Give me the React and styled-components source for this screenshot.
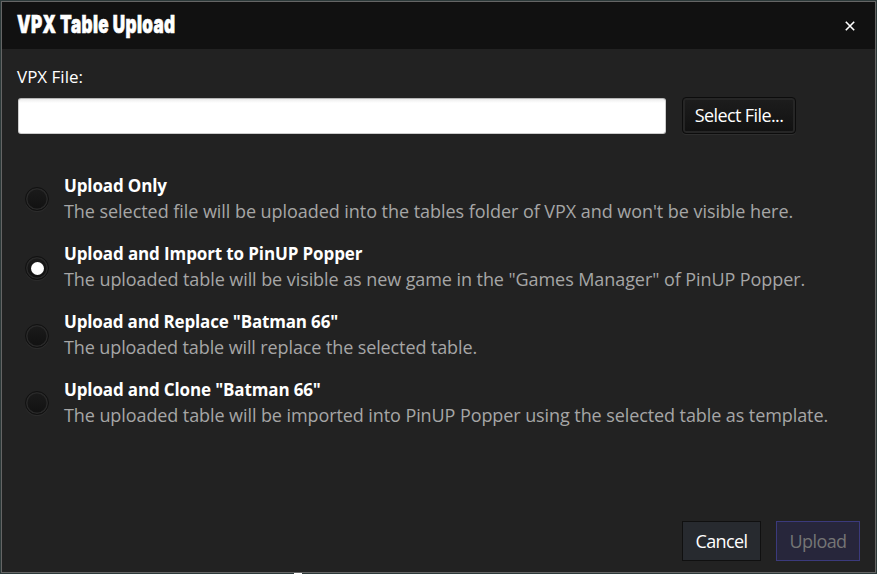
import React, { useState } from "react";
import styled, { createGlobalStyle, css } from "styled-components";

const Page = createGlobalStyle`
  * { box-sizing: border-box; }
  body { margin: 0; background: #2d3a3a; overflow: hidden; }
`;

const Desktop = styled.div`
  position: relative;
  width: 877px;
  height: 574px;
  padding: 1px;
  background: #2d3a3a;
  font-family: "Open Sans", "Noto Sans", sans-serif;
  font-size: 18px;
  color: #fff;
`;

const Dialog = styled.main`
  display: flex;
  flex-direction: column;
  width: 875px;
  height: 572px;
  border: 1px solid #656565;
  background: #222;
`;

const TitleBar = styled.header`
  display: flex;
  flex: none;
  align-items: center;
  justify-content: space-between;
  height: 47px;
  padding: 0 20px 4px 15px;
  background: #111;
`;

const Title = styled.h1`
  margin: 0;
  font: 900 25px/30px Inter, sans-serif;
  letter-spacing: 0.5px;
  white-space: nowrap;
  -webkit-text-stroke: 0.6px #fff;
  transform: scaleX(0.685);
  transform-origin: left center;
`;

const CloseButton = styled.button`
  display: flex;
  padding: 0;
  border: 0;
  margin-top: 4px;
  background: none;
  color: #fff;
`;

const Body = styled.section`
  display: flex;
  flex: 1;
  flex-direction: column;
  padding: 14px 15px 11px 15px;
`;

const Text = styled.span`
  white-space: nowrap;
  letter-spacing: ${(p) => p.$spacing || 0}px;
`;

const FieldLabel = styled.label`
  height: 26px;
  font-size: 17px;
  line-height: 27px;
`;

const FileRow = styled.div`
  display: flex;
  align-items: flex-start;
  gap: 16px;
  margin-top: 8px;
  height: 38px;
`;

const FileInput = styled.input`
  width: 648px;
  height: 36px;
  margin: 1px 0 0 1px;
  padding: 0 10px;
  border: 1px solid #ccc;
  border-top-color: #b5b5b5;
  border-radius: 3px;
  background: linear-gradient(#ececec, #fff 4px);
  outline: 0;
`;

const buttonText = css`
  display: flex;
  align-items: center;
  justify-content: center;
  padding: 0;
  font: 18px "Open Sans", sans-serif;
`;

const SelectButton = styled.button`
  ${buttonText}
  width: 114px;
  height: 37px;
  padding-bottom: 1px;
  border: 1px solid #0c0c0c;
  border-radius: 4px;
  background: linear-gradient(#1d1d1d, #111);
  box-shadow: inset 0 0 0 2px #262626, 0 1px 0 #2e2e2e;
  color: #fff;
`;

const Options = styled.div`
  display: flex;
  flex-direction: column;
  margin-top: 37px;
`;

const Option = styled.label`
  display: flex;
  height: 68px;
`;

const Radio = styled.span`
  display: flex;
  flex: none;
  align-items: center;
  justify-content: center;
  width: 24px;
  height: 24px;
  margin: ${(p) => p.$top}px 15px 0 8px;
  border: 1px solid #111;
  border-radius: 50%;
  background: linear-gradient(#1b1b1b, #111);
  box-shadow: inset 0 0 0 1.5px #292929, 0 1px 0 #2d2d2d;
  &::after {
    content: "";
    width: 13px;
    height: 13px;
    border-radius: 50%;
    background: ${(p) => (p.$checked ? "#fff" : "transparent")};
  }
`;

const OptionText = styled.span`
  display: flex;
  flex-direction: column;
`;

const OptionTitle = styled(Text)`
  height: 26px;
  font-size: 17px;
  font-weight: 700;
  line-height: 28px;
`;

const OptionDescription = styled(Text)`
  color: #a6a6a6;
  line-height: 26px;
`;

const HiddenInput = styled.input`
  position: absolute;
  opacity: 0;
  pointer-events: none;
`;

const Footer = styled.footer`
  display: flex;
  justify-content: flex-end;
  gap: 15px;
  margin-top: auto;
`;

const FooterButton = styled.button`
  ${buttonText}
  width: ${(p) => (p.$primary ? 84 : 79)}px;
  height: 40px;
  border: 1px solid ${(p) => (p.$primary ? "#3b3a7c" : "#101010")};
  background: ${(p) => (p.$primary ? "#27263b" : "#272a2f")};
  color: ${(p) => (p.$primary ? "#757575" : "#fff")};
`;

const DesktopSpeck = styled.i`
  position: absolute;
  left: 294px;
  bottom: 0;
  width: 8px;
  height: 1px;
  background: #fff;
`;

const options = [
  { title: "Upload Only", text: "The selected file will be uploaded into the tables folder of VPX and won't be visible here.", ts: -0.13, ds: -0.05, top: 15 },
  { title: "Upload and Import to PinUP Popper", text: 'The uploaded table will be visible as new game in the "Games Manager" of PinUP Popper.', ts: -0.12, ds: -0.075, top: 16 },
  { title: 'Upload and Replace "Batman 66"', text: "The uploaded table will replace the selected table.", ts: -0.17, ds: -0.11, top: 16 },
  { title: 'Upload and Clone "Batman 66"', text: "The uploaded table will be imported into PinUP Popper using the selected table as template.", ts: -0.14, ds: -0.085, top: 15 },
];

export default function App() {
  const [selected, setSelected] = useState(1);
  return (
    <Desktop>
      <Page />
      <Dialog>
        <TitleBar>
          <Title>VPX Table Upload</Title>
          <CloseButton aria-label="Close">
            <svg width="10" height="10" viewBox="0 0 10 10" stroke="currentColor" strokeWidth="1.6">
              <path d="M0.8 0.8 9.2 9.2M9.2 0.8 0.8 9.2" />
            </svg>
          </CloseButton>
        </TitleBar>
        <Body>
          <FieldLabel htmlFor="file"><Text>VPX File:</Text></FieldLabel>
          <FileRow>
            <FileInput id="file" readOnly />
            <SelectButton><Text $spacing={-0.6}>Select File...</Text></SelectButton>
          </FileRow>
          <Options>
            {options.map((o, i) => (
              <Option key={o.title}>
                <HiddenInput type="radio" name="mode" checked={i === selected} onChange={() => setSelected(i)} />
                <Radio $checked={i === selected} $top={o.top} />
                <OptionText>
                  <OptionTitle $spacing={o.ts}>{o.title}</OptionTitle>
                  <OptionDescription $spacing={o.ds}>{o.text}</OptionDescription>
                </OptionText>
              </Option>
            ))}
          </Options>
          <Footer>
            <FooterButton><Text $spacing={-0.6}>Cancel</Text></FooterButton>
            <FooterButton $primary disabled><Text $spacing={-0.6}>Upload</Text></FooterButton>
          </Footer>
        </Body>
      </Dialog>
      <DesktopSpeck />
    </Desktop>
  );
}
